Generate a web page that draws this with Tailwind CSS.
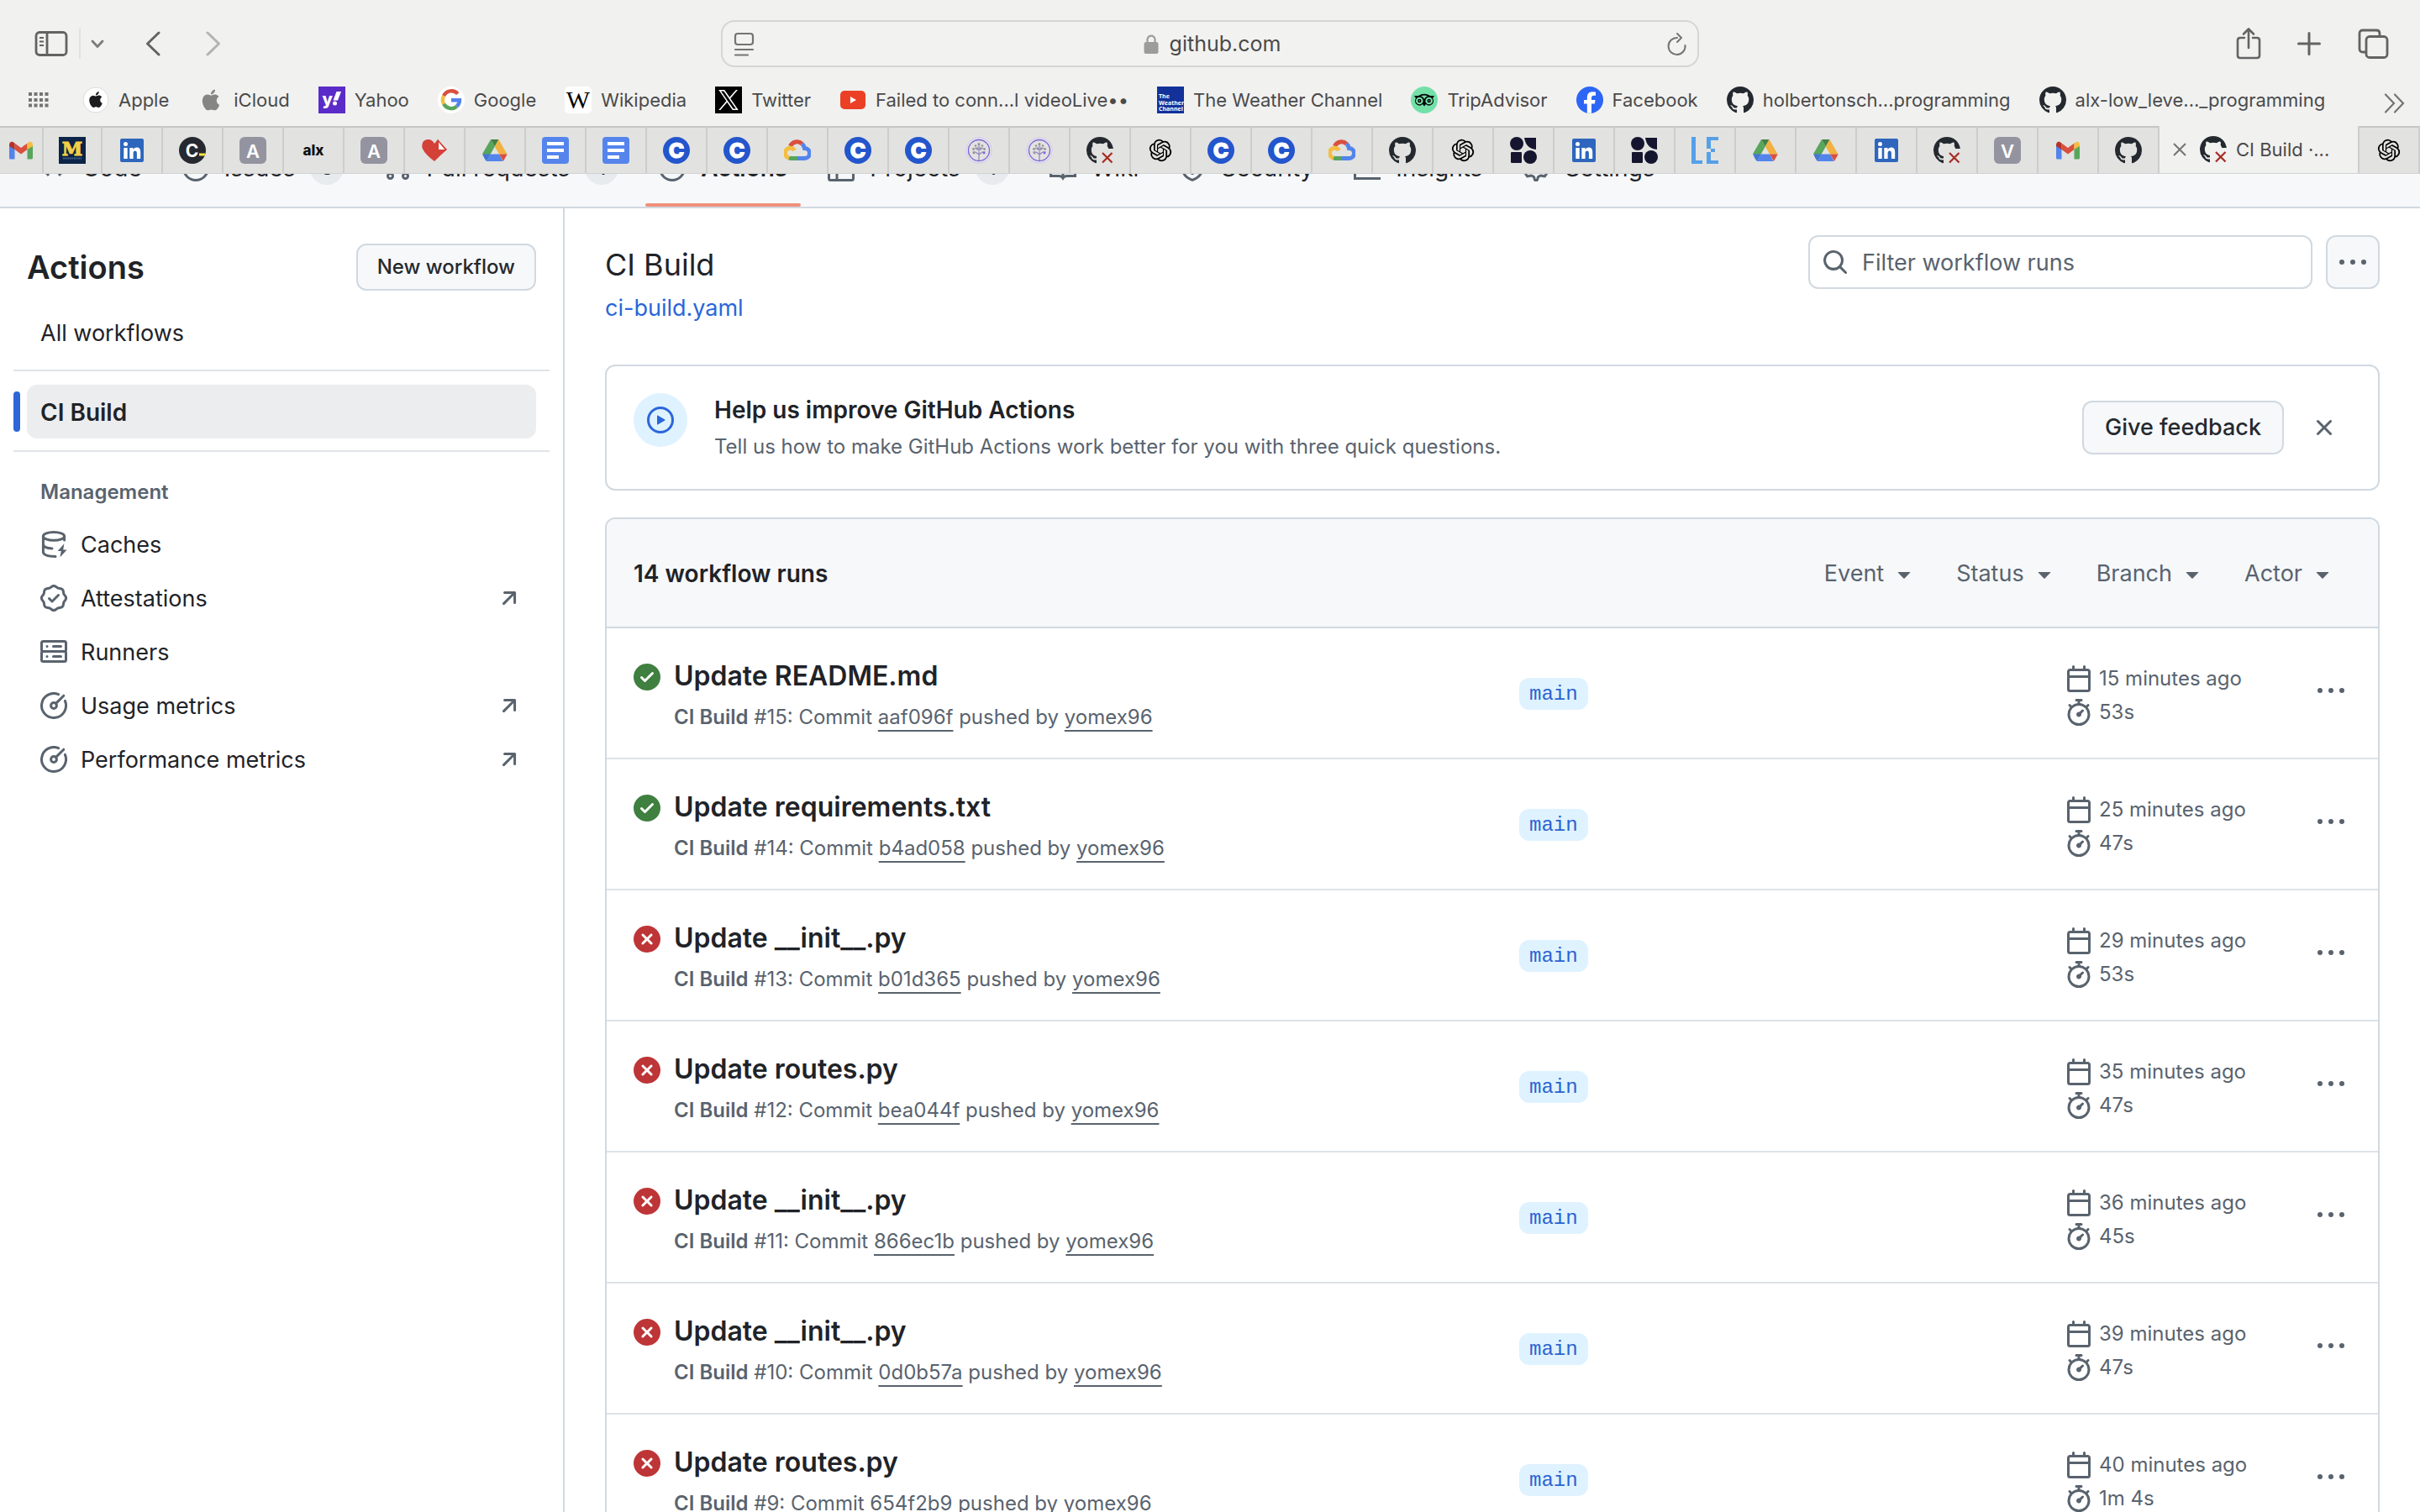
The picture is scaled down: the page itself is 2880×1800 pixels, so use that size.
<!DOCTYPE html>
<html lang="en">
<head>
<meta charset="utf-8">
<meta name="viewport" content="width=device-width, initial-scale=1">
<title>CI Build · Workflow runs</title>
<script src="https://cdn.jsdelivr.net/npm/@tailwindcss/browser@4"></script>
</head>
<body class="h-screen overflow-hidden flex flex-col bg-white font-[Inter,sans-serif] text-[#1f2328]">

<svg class="hidden" aria-hidden="true">
  <symbol id="github" viewBox="0 0 16 16"><path d="M8 0c4.42 0 8 3.58 8 8a8.013 8.013 0 0 1-5.45 7.59c-.4.08-.55-.17-.55-.38 0-.27.01-1.13.01-2.2 0-.75-.25-1.23-.54-1.48 1.78-.2 3.65-.88 3.65-3.95 0-.88-.31-1.59-.82-2.15.08-.2.36-1.02-.08-2.12 0 0-.67-.22-2.2.82-.64-.18-1.32-.27-2-.27-.68 0-1.36.09-2 .27-1.53-1.03-2.2-.82-2.2-.82-.44 1.1-.16 1.92-.08 2.12-.51.56-.82 1.28-.82 2.15 0 3.06 1.86 3.75 3.64 3.95-.23.2-.44.55-.51 1.07-.46.21-1.61.55-2.33-.66-.15-.24-.6-.83-1.23-.82-.67.01-.27.38.01.53.34.19.73.9.82 1.13.16.45.68 1.31 2.69.94 0 .67.01 1.3.01 1.49 0 .21-.15.45-.55.38A7.995 7.995 0 0 1 0 8c0-4.42 3.58-8 8-8Z" fill="#24292f"/></symbol>
  <symbol id="github-failed" viewBox="0 0 32 32">
    <svg width="32" height="14" viewBox="0 0 32 14"><use href="#github" width="32" height="32"/></svg>
    <svg y="14" width="12" height="18" viewBox="0 14 12 18"><use href="#github" width="32" height="32"/></svg>
    <path d="M19 19L30.500 30.500M30.500 19L19 30.500" stroke="#a72b22" stroke-width="2.200" fill="none"/>
  </symbol>
  <symbol id="apple" viewBox="0 0 24 24"><path fill="currentColor" d="M12.152 6.896c-.948 0-2.415-1.078-3.96-1.04-2.04.027-3.91 1.183-4.961 3.014-2.117 3.675-.546 9.103 1.519 12.09 1.013 1.454 2.208 3.09 3.792 3.039 1.52-.065 2.09-.987 3.935-.987 1.831 0 2.35.987 3.96.948 1.637-.026 2.676-1.48 3.676-2.948 1.156-1.688 1.636-3.325 1.662-3.415-.039-.013-3.182-1.221-3.22-4.857-.026-3.04 2.48-4.494 2.597-4.559-1.429-2.09-3.623-2.324-4.39-2.376-2-.156-3.675 1.09-4.61 1.09zM15.53 3.83c.843-1.012 1.4-2.427 1.245-3.83-1.207.052-2.662.805-3.532 1.818-.78.896-1.454 2.338-1.273 3.714 1.338.104 2.715-.688 3.559-1.701"/></symbol>
  <symbol id="apple-badge" viewBox="0 0 32 32"><circle cx="16" cy="16" r="15" fill="#fff" stroke="#d4d4d4" stroke-width=".8"/><use href="#apple" x="6.500" y="6" width="19" height="19" color="#1c1c1e"/></symbol>
  <symbol id="icloud" viewBox="0 0 32 32"><use href="#apple" x="3.500" y="3.500" width="25" height="25" color="#858585"/></symbol>
  <symbol id="yahoo" viewBox="0 0 32 32"><rect width="32" height="32" fill="#5b2bc9"/><text x="4.500" y="22" font-family="Inter" font-weight="800" font-size="20" fill="#fff">y</text><path d="M21.500 6H27L23 16.500H17.500Z" fill="#fff"/><circle cx="19.500" cy="20" r="2.500" fill="#fff"/></symbol>
  <symbol id="google" viewBox="0 0 32 32"><circle cx="16" cy="16" r="16" fill="#fff"/><g fill="none" stroke-width="4.400">
    <path d="M23.800 8.600A10.100 10.100 0 0 0 7.100 11.200" stroke="#d9503f"/><path d="M7.100 11.200A10.100 10.100 0 0 0 7.100 20.800" stroke="#f3be42"/><path d="M7.100 20.800A10.100 10.100 0 0 0 22.500 23.700" stroke="#58a55c"/><path d="M22.500 23.700A10.100 10.100 0 0 0 26 16.200H16" stroke="#5284ec"/></g></symbol>
  <symbol id="wikipedia" viewBox="0 0 32 32"><rect width="32" height="32" rx="5" fill="#fff"/><text x="16" y="25.500" text-anchor="middle" font-family="Liberation Serif" font-size="30" fill="#000">W</text></symbol>
  <symbol id="x-logo" viewBox="0 0 32 32"><rect width="32" height="32"/><path transform="translate(4 4)" fill="#fff" d="M14.234 10.162 22.977 0h-2.072l-7.591 8.824L7.251 0H.258l9.168 13.343L.258 24H2.330l8.016-9.318L16.749 24h6.993zm-2.837 3.299-.929-1.329L3.076 1.560h3.182l5.965 8.532.929 1.329 7.754 11.090h-3.182z"/></symbol>
  <symbol id="youtube" viewBox="0 0 32 32"><rect x="1" y="5" width="30" height="22" rx="5" fill="#ec4026"/><path d="M13 12L20 16L13 20Z" fill="#fff"/></symbol>
  <symbol id="weather" viewBox="0 0 32 32"><rect width="32" height="32" fill="#12329a"/><g font-family="Open Sans" font-weight="700" font-size="7" fill="#fff"><text x="2" y="14">The</text><text x="2" y="21.500">Weather</text><text x="2" y="29">Channel</text></g></symbol>
  <symbol id="tripadvisor" viewBox="0 0 32 32"><circle cx="16" cy="16" r="16" fill="#73e0a8"/><path d="M4 11H9Q16 6.500 23 11H28L26 14Q28 17 26 20.500Q22 24.500 18 21L16 23.500L14 21Q10 24.500 6 20.500Q4 17 6 14Z" fill="#000"/><circle cx="10.300" cy="17" r="4.300" fill="#73e0a8"/><circle cx="21.700" cy="17" r="4.300" fill="#73e0a8"/><circle cx="10.300" cy="17" r="2.200"/><circle cx="21.700" cy="17" r="2.200"/><circle cx="10.300" cy="17" r=".8" fill="#73e0a8"/><circle cx="21.700" cy="17" r=".8" fill="#73e0a8"/><path d="M12 11.300Q16 9.500 20 11.300Q17 12.500 16 15Q15 12.500 12 11.300Z" fill="#73e0a8"/></symbol>
  <symbol id="facebook" viewBox="0 0 32 32"><circle cx="16" cy="16" r="16" fill="#2d66f6"/><path d="M12.800 31.700V20.600H9V16H12.800V13Q12.800 6.200 19 6.200Q21.500 6.200 23 6.600V10.700H20.700Q18 10.700 18 13.300V16H22.600L21.800 20.600H18V31.700Z" fill="#fff"/></symbol>

  <symbol id="gmail" viewBox="0 0 32 32"><path d="M2 9V25a1.500 1.500 0 0 0 1.500 1.500H8.500V13Z" fill="#5284ec"/><path d="M30 9V25a1.500 1.500 0 0 1-1.500 1.500H23.500V13Z" fill="#58a55c"/><path d="M8.500 7.500L16 13L23.500 7.500V15L16 20.500L8.500 15Z" fill="#d9503f"/><path d="M2 9.500C2 5.500 5.500 4.500 8.500 7.500V15L2 11Z" fill="#b3322a"/><path d="M30 9.500C30 5.500 26.500 4.500 23.500 7.500V15L30 11Z" fill="#f3be42"/></symbol>
  <symbol id="michigan" viewBox="0 0 32 32"><rect width="32" height="32" fill="#0b2447"/><text x="16" y="21.500" text-anchor="middle" font-family="DejaVu Serif" font-weight="700" font-size="22" fill="#f7cd45" stroke="#f7cd45" stroke-width="1">M</text><path d="M5 25.500H27" stroke="#45628a" stroke-width="2" stroke-dasharray="2 .6"/></symbol>
  <symbol id="linkedin" viewBox="0 0 32 32"><rect x="2" y="2" width="28" height="28" rx="2" fill="#2d66bc"/><circle cx="8.500" cy="8.500" r="2.500" fill="#fff"/><path d="M6.300 13H10.700V26H6.300ZM13.300 13H17.500V15Q19 12.600 21.800 12.600Q26.200 12.600 26.200 18V26H21.900V19Q21.900 16.400 19.900 16.400Q17.600 16.400 17.600 19V26H13.300Z" fill="#fff"/></symbol>
  <symbol id="codecademy" viewBox="0 0 32 32"><circle cx="16" cy="16" r="16" fill="#26292f"/><text x="15.500" y="23.500" text-anchor="middle" font-family="Inter" font-weight="700" font-size="21" fill="#fff">C</text><path d="M24 19.500H31.700L30.500 22.500H24Z" fill="#fbe64b"/></symbol>
  <symbol id="letter-a" viewBox="0 0 32 32"><rect width="32" height="32" rx="6" fill="#9494a0"/><text x="16" y="24.500" text-anchor="middle" font-family="Inter" font-weight="600" font-size="22" fill="#fff">A</text></symbol>
  <symbol id="letter-v" viewBox="0 0 32 32"><rect width="32" height="32" rx="6" fill="#9494a0"/><text x="16" y="24.500" text-anchor="middle" font-family="Inter" font-weight="600" font-size="22" fill="#fff">V</text></symbol>
  <symbol id="alx" viewBox="0 0 32 32"><text x="16" y="22" text-anchor="middle" font-family="Inter" font-weight="800" font-size="17" fill="#111">alx</text></symbol>
  <symbol id="heart" viewBox="0 0 32 32"><path d="M16 29Q4 20 1.500 13Q0 4 8 3Q13 2.500 16 8L20 3L31 15Q24 21 16 29Z" fill="#d34138"/><path d="M20.500 4.500V15.500H29.500Z" fill="#fff" stroke="#d34138" stroke-width="1.200"/></symbol>
  <symbol id="drive" viewBox="0 0 32 32"><path d="M11 3L15.800 11.500L6 28.500Q3 25 1.200 20Z" fill="#58a55c"/><path d="M11 3H20.500L15.800 11.500Z" fill="#428044"/><path d="M20.500 3L30.500 20.500H21L15.800 11.500Z" fill="#f1b241"/><path d="M1.200 20.500H11L6 29Q4.500 28 1.200 20.500Z" fill="#4576d6"/><path d="M11 20.500H21L25.500 29H6Z" fill="#5284ec"/><path d="M21 20.500H30.700L26 29Z" fill="#d9503f"/></symbol>
  <symbol id="docs" viewBox="0 0 32 32"><rect width="32" height="32" rx="4" fill="#5585ec"/><path d="M6 6H26V10H6ZM6 14H26V18H6ZM6 22H20V26H6Z" fill="#fff"/></symbol>
  <symbol id="coursera" viewBox="0 0 32 32"><circle cx="16" cy="16" r="16" fill="#2355cc"/><text x="16" y="25" text-anchor="middle" font-family="Inter" font-weight="800" font-size="25" fill="#fff" stroke="#fff" stroke-width="1.200">C</text></symbol>
  <symbol id="gcloud" viewBox="0 0 32 32"><g fill="none" stroke-width="5"><path d="M7.500 11A8.700 8.700 0 0 1 21.500 8.200" stroke="#d9503f"/><path d="M21.500 8.200A8.500 8.500 0 0 1 24.500 13.500A6 6 0 0 1 24.500 25.500H16" stroke="#5284ec"/><path d="M16 25.500H8Q6.500 25.500 5.500 24.500" stroke="#58a55c"/><path d="M6 25A6 6 0 1 1 12.500 16" stroke="#f3be42"/></g></symbol>
  <symbol id="tree" viewBox="0 0 32 32"><g fill="none"><circle cx="16" cy="16" r="15.300" stroke="#d3caf5" stroke-width="1"/><circle cx="16" cy="16" r="12.500" stroke="#7d63d8" stroke-width="1.300"/><path d="M16 28V17M16 21L12 18H8.500M16 21L20 18H23.500M16 16V9M16 16L11 13M16 16L21 13" stroke="#8f84bd" stroke-width="1.200"/></g><g fill="#949494"><circle cx="16" cy="8.500" r="1.500"/><circle cx="12" cy="10.500" r="1.300"/><circle cx="20" cy="10.500" r="1.300"/><circle cx="9.500" cy="14.500" r="1.400"/><circle cx="22.500" cy="14.500" r="1.400"/><circle cx="14" cy="13.500" r="1.200"/><circle cx="18" cy="13.500" r="1.200"/><circle cx="10" cy="19" r="1.400"/><circle cx="22" cy="19" r="1.400" fill="#7d63d8"/></g></symbol>
  <symbol id="openai" viewBox="0 0 32 32"><path transform="translate(2.800 2.800) scale(1.100)" fill="#000" d="M22.2819 9.8211a5.9847 5.9847 0 0 0-.5157-4.9108 6.0462 6.0462 0 0 0-6.5098-2.9A6.0651 6.0651 0 0 0 4.9807 4.1818a5.9847 5.9847 0 0 0-3.9977 2.9 6.0462 6.0462 0 0 0 .7427 7.0966 5.98 5.98 0 0 0 .511 4.9107 6.051 6.051 0 0 0 6.5146 2.9001A5.9847 5.9847 0 0 0 13.2599 24a6.0557 6.0557 0 0 0 5.7718-4.2058 5.9894 5.9894 0 0 0 3.9977-2.9001 6.0557 6.0557 0 0 0-.7475-7.0729zm-9.022 12.6081a4.4755 4.4755 0 0 1-2.8764-1.0408l.1419-.0804 4.7783-2.7582a.7948.7948 0 0 0 .3927-.6813v-6.7369l2.02 1.1686a.071.071 0 0 1 .038.052v5.5826a4.504 4.504 0 0 1-4.4945 4.4944zm-9.6607-4.1254a4.4708 4.4708 0 0 1-.5346-3.0137l.142.0852 4.783 2.7582a.7712.7712 0 0 0 .7806 0l5.8428-3.3685v2.3324a.0804.0804 0 0 1-.0332.0615L9.74 19.9502a4.4992 4.4992 0 0 1-6.1408-1.6464zM2.3408 7.8956a4.485 4.485 0 0 1 2.3655-1.9728V11.6a.7664.7664 0 0 0 .3879.6765l5.8144 3.3543-2.0201 1.1685a.0757.0757 0 0 1-.071 0l-4.8303-2.7865A4.504 4.504 0 0 1 2.3408 7.872zm16.5963 3.8558L13.1038 8.364 15.1192 7.2a.0757.0757 0 0 1 .071 0l4.8303 2.7913a4.4944 4.4944 0 0 1-.6765 8.1042v-5.6772a.79.79 0 0 0-.407-.667zm2.0107-3.0231l-.142-.0852-4.7735-2.7818a.7759.7759 0 0 0-.7854 0L9.409 9.2297V6.8974a.0662.0662 0 0 1 .0284-.0615l4.8303-2.7866a4.4992 4.4992 0 0 1 6.6802 4.66zM8.3065 12.863l-2.02-1.1638a.0804.0804 0 0 1-.038-.0567V6.0742a4.4992 4.4992 0 0 1 7.3757-3.4537l-.142.0805L8.704 5.459a.7948.7948 0 0 0-.3927.6813zm1.0976-2.3654l2.602-1.4998 2.6069 1.4998v2.9994l-2.5974 1.4997-2.6067-1.4997Z"/></symbol>
  <symbol id="shapes" viewBox="0 0 32 32"><g fill="#16152f"><circle cx="8" cy="8" r="8"/><path d="M17 1H31V15Q19 14 17 1Z"/><rect x="1" y="18" width="13" height="13" rx="1"/><circle cx="24" cy="24" r="8"/></g></symbol>
  <symbol id="le" viewBox="0 0 32 32"><g fill="#55a0e8"><path d="M0 0H5V28H13V32H0Z"/><path d="M18 0H32V4H23V14H28V18H23V28H32V32H18V18H23V14H18Z"/></g></symbol>

  <symbol id="code" viewBox="0 0 16 16"><path d="M5 3.500L1 8L5 12.500M11 3.500L15 8L11 12.500" fill="none" stroke="currentColor" stroke-width="1.500"/></symbol>
  <symbol id="issue" viewBox="0 0 16 16"><circle cx="8" cy="8" r="7.250" fill="none" stroke="currentColor" stroke-width="1.500"/><circle cx="8" cy="8" r="1.500" fill="currentColor"/></symbol>
  <symbol id="pull" viewBox="0 0 16 16"><g fill="none" stroke="currentColor" stroke-width="1.500"><circle cx="3.750" cy="3.250" r="1.500"/><circle cx="3.750" cy="12.750" r="1.500"/><circle cx="12.750" cy="12.750" r="1.500"/><path d="M3.750 5V11M12.750 11V5Q12.750 3.250 11 3.250H9"/></g></symbol>
  <symbol id="play" viewBox="0 0 16 16"><path fill="currentColor" d="M8 0a8 8 0 1 1 0 16A8 8 0 0 1 8 0ZM1.500 8a6.500 6.500 0 1 0 13 0 6.500 6.500 0 0 0-13 0Zm4.879-2.773 4.264 2.559a.25.25 0 0 1 0 .428l-4.264 2.559A.25.25 0 0 1 6 10.559V5.442a.25.25 0 0 1 .379-.215Z"/></symbol>
  <symbol id="table" viewBox="0 0 16 16"><path d="M1.750 .75H14.250Q15.250 .75 15.250 1.750V14.250Q15.250 15.250 14.250 15.250H1.750Q.75 15.250 .75 14.250V1.750Q.75 .75 1.750 .75ZM.75 5.500H15.250M5.500 5.500V15.250" fill="none" stroke="currentColor" stroke-width="1.500"/></symbol>
  <symbol id="book" viewBox="0 0 16 16"><path d="M.75 2H5Q8 2 8 4.500Q8 2 11 2H15.250V12.750H10.500Q8.700 12.750 8 14Q7.300 12.750 5.500 12.750H.75ZM8 4.500V14" fill="none" stroke="currentColor" stroke-width="1.500"/></symbol>
  <symbol id="shield" viewBox="0 0 16 16"><path d="M8 1L14 3V7.500Q14 13 8 15.200Q2 13 2 7.500V3ZM8 5V8.500M8 10V12" fill="none" stroke="currentColor" stroke-width="1.500"/></symbol>
  <symbol id="graph" viewBox="0 0 16 16"><path d="M.75 1V14.250H16M4 10L7 7L9.500 9.500L14.500 4.500" fill="none" stroke="currentColor" stroke-width="1.500"/></symbol>
  <symbol id="gear" viewBox="0 0 16 16"><path d="M7.300 15.200H8.700L9.300 13.200L10.800 12.500L13.200 13L14.500 11L13 8.800V7.200L14.500 5L13.200 3L10.800 3.500L9.300 2.800L8.700 .8H7.300L6.700 2.800L5.200 3.500L2.800 3L1.500 5L3 7.200V8.800L1.500 11L2.800 13L5.200 12.500L6.700 13.200Z" fill="none" stroke="currentColor" stroke-width="1.500" stroke-linejoin="round"/><circle cx="8" cy="8" r="2.300" fill="none" stroke="currentColor" stroke-width="1.500"/></symbol>

  <symbol id="cache" viewBox="0 0 16 16"><g fill="none" stroke="currentColor" stroke-width="1.500" stroke-linecap="round"><ellipse cx="8" cy="3.200" rx="6.300" ry="2.450"/><path d="M1.700 3.200V12.700Q2 15.200 9 15.200M1.700 8Q2 10.200 7 10.500M14.300 3.200V5.500"/></g><path d="M14.200 7.600L10.300 12H12.400L11.700 15.800L15.800 11.200H13.600Z" fill="currentColor"/></symbol>
  <symbol id="verified" viewBox="0 0 16 16"><path fill="currentColor" d="m9.585.52.929.68c.153.112.331.186.518.215l1.138.175a2.678 2.678 0 0 1 2.240 2.240l.174 1.139c.029.187.103.365.215.518l.68.928a2.677 2.677 0 0 1 0 3.170l-.68.928a1.174 1.174 0 0 0-.215.518l-.175 1.138a2.678 2.678 0 0 1-2.241 2.241l-1.138.175a1.170 1.170 0 0 0-.518.215l-.928.68a2.677 2.677 0 0 1-3.170 0l-.928-.68a1.174 1.174 0 0 0-.518-.215L3.830 14.410a2.678 2.678 0 0 1-2.240-2.240l-.175-1.138a1.170 1.170 0 0 0-.215-.518l-.68-.928a2.677 2.677 0 0 1 0-3.170l.68-.928c.112-.153.186-.331.215-.518l.175-1.140a2.678 2.678 0 0 1 2.240-2.240l1.139-.175c.187-.029.365-.103.518-.215l.928-.68a2.677 2.677 0 0 1 3.170 0ZM7.303 1.728l-.927.68a2.670 2.670 0 0 1-1.180.489l-1.137.174a1.179 1.179 0 0 0-.987.987l-.174 1.136a2.677 2.677 0 0 1-.489 1.180l-.68.928a1.180 1.180 0 0 0 0 1.394l.68.927c.256.348.424.753.489 1.180l.174 1.137c.078.509.478.909.987.987l1.136.174a2.670 2.670 0 0 1 1.180.489l.928.68c.414.305.979.305 1.394 0l.927-.68a2.670 2.670 0 0 1 1.180-.489l1.137-.174a1.180 1.180 0 0 0 .987-.987l.174-1.136a2.670 2.670 0 0 1 .489-1.180l.68-.928a1.176 1.176 0 0 0 0-1.394l-.68-.927a2.686 2.686 0 0 1-.489-1.180l-.174-1.137a1.179 1.179 0 0 0-.987-.987l-1.136-.174a2.677 2.677 0 0 1-1.180-.489l-.928-.68a1.176 1.176 0 0 0-1.394 0ZM11.280 6.780l-3.750 3.750a.75.75 0 0 1-1.060 0L4.720 8.780a.751.751 0 0 1 .018-1.042.751.751 0 0 1 1.042-.018L7 8.940l3.220-3.220a.751.751 0 0 1 1.042.018.751.751 0 0 1 .018 1.042Z"/></symbol>
  <symbol id="server" viewBox="0 0 16 16"><g fill="none" stroke="currentColor" stroke-width="1.500" stroke-linecap="round"><rect x=".75" y="1.750" width="14.500" height="6" rx="1"/><rect x=".75" y="7.750" width="14.500" height="6" rx="1"/><path d="M4 4.750H4.010M7.750 4.750H12.250M4 10.750H4.010M7.750 10.750H12.250"/></g></symbol>
  <symbol id="meter" viewBox="0 0 16 16"><g fill="none" stroke="currentColor" stroke-width="1.500" stroke-linecap="round"><path d="M10.800 1.300A7.250 7.250 0 1 0 14.700 5.200"/><circle cx="8" cy="8" r="1.700"/><path d="M9.300 6.700L13.900 2.100"/></g></symbol>
  <symbol id="up-right" viewBox="0 0 16 16"><path fill="currentColor" d="M4.530 4.750A.75.75 0 0 1 5.280 4h6.010a.75.75 0 0 1 .75.75v6.010a.75.75 0 0 1-1.500 0v-4.200l-5.260 5.261a.749.749 0 0 1-1.275-.326.749.749 0 0 1 .215-.734L9.480 5.500h-4.200a.75.75 0 0 1-.75-.75Z"/></symbol>
  <symbol id="success" viewBox="0 0 16 16"><path fill="currentColor" d="M8 16A8 8 0 1 1 8 0a8 8 0 0 1 0 16Zm3.780-9.720a.751.751 0 0 0-.018-1.042.751.751 0 0 0-1.042-.018L6.750 9.190 5.280 7.720a.751.751 0 0 0-1.042.018.751.751 0 0 0-.018 1.042l2 2a.75.75 0 0 0 1.060 0Z"/></symbol>
  <symbol id="failure" viewBox="0 0 16 16"><path fill="currentColor" d="M2.343 13.657A8 8 0 1 1 13.658 2.343 8 8 0 0 1 2.343 13.657ZM6.030 4.970a.751.751 0 0 0-1.042.018.751.751 0 0 0-.018 1.042L6.940 8 4.970 9.970a.749.749 0 0 0 .326 1.275.749.749 0 0 0 .734-.215L8 9.060l1.970 1.970a.749.749 0 0 0 1.275-.326.749.749 0 0 0-.215-.734L9.060 8l1.970-1.970a.749.749 0 0 0-.326-1.275.749.749 0 0 0-.734.215L8 6.940Z"/></symbol>
  <symbol id="calendar" viewBox="0 0 16 16"><path fill="currentColor" d="M4.750 0a.75.75 0 0 1 .75.75V2h5V.75a.75.75 0 0 1 1.500 0V2h1.250c.966 0 1.750.784 1.750 1.750v10.500A1.750 1.750 0 0 1 13.250 16H2.750A1.750 1.750 0 0 1 1 14.250V3.750C1 2.784 1.784 2 2.750 2H4V.75A.75.75 0 0 1 4.750 0ZM2.500 7.500v6.750c0 .138.112.25.25.25h10.500a.25.25 0 0 0 .25-.25V7.500Zm10.750-4H2.750a.25.25 0 0 0-.25.25V6h11V3.750a.25.25 0 0 0-.25-.25Z"/></symbol>
  <symbol id="stopwatch" viewBox="0 0 16 16"><path fill="currentColor" d="M5.750.75A.75.75 0 0 1 6.500 0h3a.75.75 0 0 1 0 1.500h-.75v1l-.001.041a6.724 6.724 0 0 1 3.464 1.435l.007-.006.75-.75a.749.749 0 0 1 1.275.326.749.749 0 0 1-.215.734l-.75.75-.006.007a6.750 6.750 0 1 1-10.548 0L2.720 5.030l-.75-.75a.751.751 0 0 1 .018-1.042.751.751 0 0 1 1.042-.018l.75.75.007.006A6.720 6.720 0 0 1 7.250 2.541V1.500H6.500a.75.75 0 0 1-.75-.75ZM8 14.500a5.250 5.250 0 1 0-.001-10.501A5.250 5.250 0 0 0 8 14.500Zm.389-6.700 1.330-1.330a.75.75 0 1 1 1.061 1.060L9.450 8.861A1.503 1.503 0 0 1 8 10.750a1.499 1.499 0 1 1 .389-2.950Z"/></symbol>
  <symbol id="dots" viewBox="0 0 16 16"><g fill="currentColor"><circle cx="1.500" cy="8" r="1.500"/><circle cx="8" cy="8" r="1.500"/><circle cx="14.500" cy="8" r="1.500"/></g></symbol>
  <symbol id="search" viewBox="0 0 16 16"><path fill="currentColor" d="M10.680 11.740a6 6 0 0 1-7.922-8.982 6 6 0 0 1 8.982 7.922l3.040 3.040a.749.749 0 0 1-.326 1.275.749.749 0 0 1-.734-.215ZM11.500 7a4.499 4.499 0 1 0-8.997 0A4.499 4.499 0 0 0 11.500 7Z"/></symbol>
  <symbol id="close" viewBox="0 0 16 16"><path fill="currentColor" d="M3.720 3.720a.75.75 0 0 1 1.060 0L8 6.940l3.220-3.220a.749.749 0 0 1 1.275.326.749.749 0 0 1-.215.734L9.060 8l3.220 3.220a.749.749 0 0 1-.326 1.275.749.749 0 0 1-.734-.215L8 9.060l-3.220 3.220a.751.751 0 0 1-1.042-.018.751.751 0 0 1-.018-1.042L6.940 8 3.720 4.780a.75.75 0 0 1 0-1.060Z"/></symbol>
  <symbol id="caret" viewBox="0 0 16 16"><path fill="currentColor" d="m4.427 7.427 3.396 3.396a.25.25 0 0 0 .354 0l3.396-3.396A.25.25 0 0 0 11.396 7H4.604a.25.25 0 0 0-.177.427Z"/></symbol>
</svg>

<!-- Browser chrome -->
<header class="shrink-0 bg-[#f1f1f0] text-[#4a4a4a]">
  <div class="flex items-center pt-6 pb-2 text-[#636363]">
    <div class="flex flex-1 items-center pl-9">
      <button aria-label="Show sidebar" class="ml-1"><svg class="w-[42px] h-8" viewBox="0 0 42 32" fill="none" stroke="currentColor" stroke-width="2.800"><rect x="3" y="2.500" width="36" height="27" rx="4"/><path d="M16 2.500V29.500"/><path d="M7 9H12M7 13.500H12M7 18H12" stroke-width="2"/></svg></button>
      <span class="ml-3 h-9 w-0.5 bg-[#e1e1e0]"></span>
      <button aria-label="Tab groups" class="ml-3"><svg class="w-4 h-4" viewBox="0 0 16 16" fill="none" stroke="#7c7c7c" stroke-width="2.800" stroke-linecap="round" stroke-linejoin="round"><path d="M2 5L8 11.500L14 5"/></svg></button>
      <button aria-label="Back" class="ml-12"><svg class="w-5 h-8" viewBox="0 0 20 32" fill="none" stroke="currentColor" stroke-width="3" stroke-linecap="round" stroke-linejoin="round"><path d="M17 3L3.500 16L17 29"/></svg></button>
      <button aria-label="Forward" class="ml-[52px]"><svg class="w-5 h-8" viewBox="0 0 20 32" fill="none" stroke="#b3b3b3" stroke-width="3" stroke-linecap="round" stroke-linejoin="round"><path d="M3 3L16.500 16L3 29"/></svg></button>
    </div>
    <div class="flex h-14 w-[1164px] items-center justify-between rounded-2xl border-2 border-[#d5d5d4] bg-[#f2f2f1] px-3">
      <button aria-label="Page menu"><svg class="w-7 h-8" viewBox="0 0 28 32" fill="none" stroke="#747474" stroke-width="2.200" stroke-linecap="round"><rect x="3" y="4" width="21" height="13" rx="3"/><path d="M3 23H24M3 29.500H18"/></svg></button>
      <label class="flex items-center gap-3">
        <svg class="w-5 h-7" viewBox="0 0 20 28"><path d="M5.500 13V8.500A4.700 5.500 0 0 1 14.500 8.500V13" fill="none" stroke="#9c9c9c" stroke-width="2.200"/><rect x="1.500" y="12" width="17" height="14" rx="2.500" fill="#9c9c9c"/></svg>
        <input aria-label="Address" value="github.com" class="field-sizing-content bg-transparent pt-0.5 text-[25px] text-[#4a4a4a] outline-none">
      </label>
      <button aria-label="Reload"><svg class="w-6 h-8" viewBox="0 0 24 32" fill="none" stroke="#747474" stroke-width="2" stroke-linecap="round" stroke-linejoin="round"><path d="M12 9A10 10 0 1 0 21.500 18M12 4L17 9L12 14"/></svg></button>
    </div>
    <div class="flex flex-1 items-center justify-end gap-10 pr-9">
      <button aria-label="Share"><svg class="w-8 h-10" viewBox="0 0 32 40" fill="none" stroke="currentColor" stroke-width="2.600" stroke-linecap="round" stroke-linejoin="round"><path d="M11 13H6Q3 13 3 16V34Q3 37 6 37H26Q29 37 29 34V16Q29 13 26 13H21M16 25V2.500M10 8.500L16 2.500L22 8.500"/></svg></button>
      <button aria-label="New tab"><svg class="w-8 h-8" viewBox="0 0 32 32" stroke="currentColor" stroke-width="3" stroke-linecap="round"><path d="M16 3.500V28.500M3.500 16H28.500"/></svg></button>
      <button aria-label="Tab overview"><svg class="w-10 h-9" viewBox="0 0 40 36" fill="none" stroke="currentColor" stroke-width="2.800"><path d="M12 28H8Q4 28 4 24V6Q4 2 8 2H24Q28 2 28 6V9"/><rect x="12" y="9.500" width="25" height="25" rx="4"/></svg></button>
    </div>
  </div>

  <nav aria-label="Favorites" class="flex h-[62px] items-center pl-8 pr-4 text-[22px]">
    <svg class="w-7 h-6" viewBox="0 0 28 24" fill="#747474"><path d="M2 3h4v4H2zM8.500 3h4v4h-4zM15 3h4v4h-4zM21.500 3h4v4h-4zM2 10h4v4H2zM8.500 10h4v4h-4zM15 10h4v4h-4zM21.500 10h4v4h-4zM2 16.500h4v4H2zM8.500 16.500h4v4h-4zM15 16.500h4v4h-4zM21.500 16.500h4v4h-4z"/></svg>
    <div id="favorites" class="ml-[38px] flex flex-1 gap-[34px] whitespace-nowrap"></div>
    <button aria-label="More favorites" class="pt-2"><svg class="w-7 h-7" viewBox="0 0 28 28" fill="none" stroke="#747474" stroke-width="2.200" stroke-linecap="round"><path d="M3 3.500L13 14L3 24.500M14 3.500L24 14L14 24.500"/></svg></button>
  </nav>

  <div id="tabs" role="tablist" class="flex h-[57px] items-stretch border-b border-[#d2d2d2] bg-[#e2e2e1]"></div>
</header>

<!-- Page viewport, scrolled so that the repository tabs sit partly under the tab strip -->
<div class="flex min-h-0 flex-1 flex-col overflow-hidden">
  <nav id="repo-nav" aria-label="Repository" class="-mt-[55px] flex h-24 shrink-0 border-b-2 border-[#d1d9e0] bg-[#f6f8fa] px-8 text-[28px]"></nav>

  <div class="flex flex-1">
    <aside class="w-[672px] shrink-0 border-r-2 border-[#d1d9e0] px-4 pt-[42px] text-[27px]">
      <div class="flex h-14 items-center justify-between px-4">
        <h2 class="text-[38px] font-semibold">Actions</h2>
        <button class="h-14 rounded-xl border-2 border-[#d1d9e0] bg-[#f6f8fa] px-[23px] text-[24px] font-medium text-[#25292e]">New workflow</button>
      </div>
      <a href="#" class="mx-4 mt-[18px] flex h-16 items-center px-4 pt-0.5">All workflows</a>
      <hr class="mt-3 border-t-2 border-[#dfe3e8]">
      <a href="#" aria-current="page" class="relative mx-4 mt-4 flex h-16 items-center rounded-xl bg-[#ecedef] px-4 pt-0.5 text-[28px] font-semibold"><span class="absolute top-2 -left-4 h-12 w-2 rounded bg-[#2e66d6]"></span>CI Build</a>
      <hr class="mt-[14px] border-t-2 border-[#dfe3e8]">
      <h3 class="mt-4 flex h-[62px] items-center px-8 pt-0.5 text-[24px] font-semibold text-[#59636e]">Management</h3>
      <ul id="management"></ul>
    </aside>

    <main class="min-w-0 flex-1 px-12 pt-8 text-[27px]">
      <div class="flex items-start gap-4">
        <div class="flex-1 pt-[10px]">
          <h1 class="text-[36px] leading-[50px]">CI Build</h1>
          <a href="#" class="block leading-[54px] text-[#2c66d8]">ci-build.yaml</a>
        </div>
        <label class="flex h-16 w-[600px] items-center gap-4 rounded-xl border-2 border-[#d1d9e0] px-[14px] text-[#59636e]">
          <svg class="size-8"><use href="#search"/></svg>
          <input type="search" aria-label="Filter workflow runs" placeholder="Filter workflow runs" class="min-w-0 flex-1 pt-0.5 outline-none placeholder:text-[#59636e]">
        </label>
        <button aria-label="Show workflow options" class="grid size-16 place-items-center rounded-xl border-2 border-[#d1d9e0] bg-[#f6f8fa] text-[#59636e]"><svg class="size-8"><use href="#dots"/></svg></button>
      </div>

      <section class="mt-10 flex items-center rounded-xl border-2 border-[#d1d9e0] pr-12 pl-8">
        <div class="flex flex-1 gap-8 pt-8 pb-[26px]">
          <span class="grid size-16 place-items-center rounded-full bg-[#dff2ff] text-[#2c66d8]"><svg class="size-8"><use href="#play"/></svg></span>
          <div>
            <h3 class="text-[28px] leading-10 font-semibold">Help us improve GitHub Actions</h3>
            <p class="text-[24px] leading-12 text-[#59636e]">Tell us how to make GitHub Actions work better for you with three quick questions.</p>
          </div>
        </div>
        <button class="h-16 rounded-xl border-2 border-[#d1d9e0] bg-[#f6f8fa] px-[25px] font-medium text-[#25292e]">Give feedback</button>
        <button aria-label="Dismiss" class="ml-8 text-[#59636e]"><svg class="size-8"><use href="#close"/></svg></button>
      </section>

      <section class="mt-8 rounded-xl border-2 border-[#d1d9e0]">
        <div class="flex h-[130px] items-center gap-[46px] rounded-t-[10px] border-b-2 border-[#d1d9e0] bg-[#f6f8fa] pt-0.5 pr-[50px] pl-8 text-[#59636e]">
          <strong class="flex-1 text-[28px] font-semibold text-[#1f2328]">14 workflow runs</strong>
          <button class="flex items-center gap-2">Event<svg class="size-8"><use href="#caret"/></svg></button>
          <button class="flex items-center gap-2">Status<svg class="size-8"><use href="#caret"/></svg></button>
          <button class="flex items-center gap-2">Branch<svg class="size-8"><use href="#caret"/></svg></button>
          <button class="flex items-center gap-2">Actor<svg class="size-8"><use href="#caret"/></svg></button>
        </div>
        <ul id="runs"></ul>
      </section>
    </main>
  </div>
</div>

<script>
const byId = id => document.getElementById(id);

const favorites = [['apple-badge','Apple'],['icloud','iCloud'],['yahoo','Yahoo'],['google','Google'],['wikipedia','Wikipedia'],['x-logo','Twitter'],['youtube','Failed to conn...l videoLive••'],['weather','The Weather Channel'],['tripadvisor','TripAdvisor'],['facebook','Facebook'],['github','holbertonsch...programming'],['github','alx-low_leve..._programming']];
byId('favorites').innerHTML = favorites.map(([icon, name]) =>
  `<a href="#" class="flex items-center gap-[11px]"><svg class="size-8"><use href="#${icon}"/></svg>${name}</a>`).join('');

const pinned = 'linkedin codecademy letter-a alx letter-a heart drive docs docs coursera coursera gcloud coursera coursera tree tree github-failed openai coursera coursera gcloud github openai shapes linkedin shapes le drive drive linkedin github-failed letter-v gmail github'.split(' ');
const tab = (icon, size) =>
  `<button role="tab" aria-label="${icon}" class="${size} flex items-center justify-center border-t-2 border-r-2 border-t-[#c6c6c6] border-r-[#cdcdcd]"><svg class="size-8"><use href="#${icon}"/></svg></button>`;
byId('tabs').innerHTML =
  tab('gmail', 'w-[52px] shrink-0') + tab('michigan', 'w-[70px] shrink-0') +
  pinned.map(icon => tab(icon, 'min-w-0 flex-1')).join('') +
  `<div role="tab" aria-selected="true" class="flex w-[238px] shrink-0 items-center border-r-2 border-[#cdcdcd] bg-[#f1f1f0] pl-[14px] text-[22px]">
    <button aria-label="Close tab"><svg class="size-5" viewBox="0 0 20 20" stroke="#747474" stroke-width="2"><path d="M3 3L17 17M17 3L3 17"/></svg></button>
    <svg class="ml-[14px] size-8"><use href="#github-failed"/></svg><span class="ml-[11px]">CI Build ·...</span></div>` +
  tab('openai', 'w-[72px] shrink-0');

const repoTabs = [['code','Code'],['issue','Issues','3'],['pull','Pull requests','1'],['play','Actions'],['table','Projects','1'],['book','Wiki'],['shield','Security'],['graph','Insights'],['gear','Settings']];
byId('repo-nav').innerHTML = `<div class="flex gap-4">` + repoTabs.map(([icon, name, count]) =>
  `<a href="#" class="relative flex items-center gap-[18px] px-4 pt-0.5 ${name === 'Actions' ? 'font-semibold' : ''}"><svg class="size-8 text-[#59636e]"><use href="#${icon}"/></svg>${name}` +
  (count ? `<span class="grid size-10 place-items-center rounded-full bg-[#e7ebee] text-[24px] font-medium">${count}</span>` : '') +
  (name === 'Actions' ? `<span class="absolute inset-x-0 bottom-0 h-1 rounded-sm bg-[#f0907a]"></span>` : '') + `</a>`).join('') + `</div>`;

const management = [['cache','Caches'],['verified','Attestations',1],['server','Runners'],['meter','Usage metrics',1],['meter','Performance metrics',1]];
byId('management').innerHTML = management.map(([icon, name, external]) =>
  `<li><a href="#" class="flex h-16 items-center gap-4 px-8"><svg class="size-8 text-[#59636e]"><use href="#${icon}"/></svg><span class="flex-1 pt-0.5">${name}</span>${external ? '<svg class="size-8 text-[#59636e]"><use href="#up-right"/></svg>' : ''}</a></li>`).join('');

const runs = [
  [15,'README.md','aaf096f','15 minutes','53s',1],
  [14,'requirements.txt','b4ad058','25 minutes','47s',1],
  [13,'__init__.py','b01d365','29 minutes','53s',0],
  [12,'routes.py','bea044f','35 minutes','47s',0],
  [11,'__init__.py','866ec1b','36 minutes','45s',0],
  [10,'__init__.py','0d0b57a','39 minutes','47s',0],
  [9,'routes.py','654f2b9','40 minutes','1m 4s',0]];
byId('runs').innerHTML = runs.map(([n, file, sha, ago, took, ok]) =>
  `<li class="grid grid-cols-[minmax(0,1054fr)_minmax(0,650fr)_300px_32px] items-start border-b-2 border-[#dde2e8] pt-9 pr-10 pb-6 pl-8 text-[24px] text-[#59636e]">
    <div class="flex gap-4">
      <svg class="mt-[6px] size-8 shrink-0 ${ok ? 'text-[#3f7f3f]' : 'text-[#be3537]'}"><use href="#${ok ? 'success' : 'failure'}"/></svg>
      <div>
        <a href="#" class="block text-[32px] leading-[42px] font-semibold text-[#1f2328]">Update ${file}</a>
        <p class="mt-1 leading-12"><b class="font-semibold">CI Build</b> #${n}: Commit <a href="#" class="underline decoration-2 underline-offset-[7px]">${sha}</a> pushed by <a href="#" class="underline decoration-2 underline-offset-[7px]">yomex96</a></p>
      </div>
    </div>
    <div class="pt-[23px]"><a href="#" class="block w-fit rounded-xl bg-[#dff2ff] px-3 pt-0.5 font-[Liberation_Mono,monospace] leading-9 text-[#2b62d1]">main</a></div>
    <div class="flex flex-col gap-2 pt-2 leading-8">
      <span class="flex gap-2"><svg class="size-8"><use href="#calendar"/></svg>${ago} ago</span>
      <span class="flex gap-2"><svg class="size-8"><use href="#stopwatch"/></svg>${took}</span>
    </div>
    <button aria-label="Run options" class="pt-[22px]"><svg class="size-8"><use href="#dots"/></svg></button>
  </li>`).join('');
</script>
</body>
</html>
